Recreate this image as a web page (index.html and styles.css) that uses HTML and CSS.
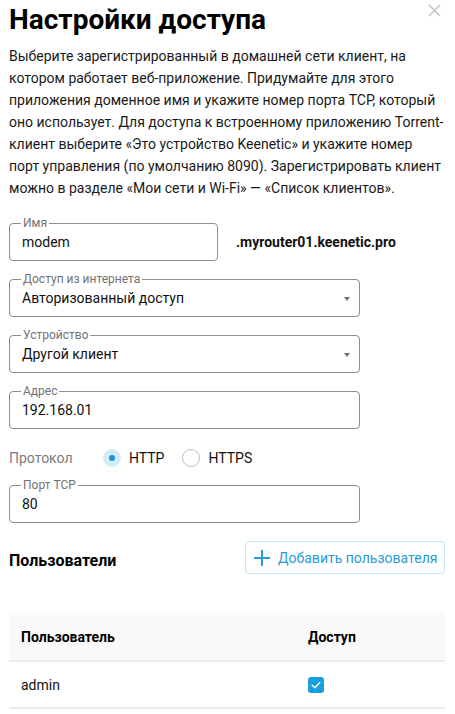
FILE: index.html
```html
<!DOCTYPE html>
<html lang="ru">
<head>
<meta charset="utf-8">
<title>Настройки доступа</title>
<link rel="stylesheet" href="styles.css">
</head>
<body>
<div class="dialog">
  <button class="close" aria-label="Закрыть">
    <svg width="13" height="13" viewBox="0 0 13 13"><path d="M1 1L12 12M12 1L1 12" stroke="#c4c4c4" stroke-width="1.6" fill="none"/></svg>
  </button>
  <h1 class="title">Настройки доступа</h1>
  <p class="intro">Выберите зарегистрированный в домашней сети клиент, на котором работает веб-приложение. Придумайте для этого приложения доменное имя и укажите номер порта TCP, который оно использует. Для доступа к встроенному приложению Torrent-клиент выберите «Это устройство Keenetic» и укажите номер порт управления (по умолчанию 8090). Зарегистрировать клиент можно в разделе «Мои сети и Wi-Fi» — «Список клиентов».</p>

  <div class="form">
    <div class="name-row">
      <div class="field field-short">
        <span class="field-label">Имя</span>
        <span class="field-value">modem</span>
      </div>
      <span class="domain">.myrouter01.keenetic.pro</span>
    </div>

    <div class="field">
      <span class="field-label">Доступ из интернета</span>
      <span class="field-value">Авторизованный доступ</span>
      <span class="caret"></span>
    </div>

    <div class="field">
      <span class="field-label">Устройство</span>
      <span class="field-value">Другой клиент</span>
      <span class="caret"></span>
    </div>

    <div class="field">
      <span class="field-label">Адрес</span>
      <span class="field-value">192.168.01</span>
    </div>

    <div class="protocol">
      <span class="protocol-label">Протокол</span>
      <label class="radio"><span class="radio-mark checked"></span>HTTP</label>
      <label class="radio"><span class="radio-mark"></span>HTTPS</label>
    </div>

    <div class="field">
      <span class="field-label">Порт TCP</span>
      <span class="field-value">80</span>
    </div>
  </div>

  <div class="users-head">
    <h2 class="users-title">Пользователи</h2>
    <button class="add-btn">
      <svg width="16" height="16" viewBox="0 0 16 16"><path d="M8 0V16M0 8H16" stroke="#2a9ad6" stroke-width="2" fill="none"/></svg>
      Добавить пользователя
    </button>
  </div>

  <table class="users">
    <thead>
      <tr><th class="col-user">Пользователь</th><th>Доступ</th></tr>
    </thead>
    <tbody>
      <tr>
        <td class="col-user">admin</td>
        <td><span class="checkbox"><svg width="16" height="16" viewBox="0 0 16 16"><path d="M4.2 8.3L6.9 10.8L11.8 5.6" stroke="#fff" stroke-width="1.4" fill="none" stroke-linecap="round" stroke-linejoin="round"/></svg></span></td>
      </tr>
    </tbody>
  </table>
</div>
</body>
</html>
```

FILE: styles.css
```css
* { box-sizing: border-box; }
html, body { margin: 0; padding: 0; background: #fff; }
body {
  font-family: Roboto, "Noto Sans", Arial, sans-serif;
  color: #1a1a1a;
  width: 455px;
}
.dialog {
  position: relative;
  padding: 3px 10px 0 9px;
}
.close {
  position: absolute;
  top: 4px;
  right: 14px;
  width: 13px;
  height: 13px;
  padding: 0;
  border: 0;
  background: none;
  display: block;
}
.close svg { display: block; }
.title {
  margin: 0;
  font-size: 28px;
  line-height: 34px;
  font-weight: 700;
  color: #000;
}
.intro {
  margin: 8px 0 0;
  font-size: 14px;
  line-height: 22px;
  color: #1a1a1a;
}
.form {
  margin-top: 24px;
  display: flex;
  flex-direction: column;
  gap: 18px;
}
.name-row {
  display: flex;
  align-items: center;
  gap: 18px;
}
.field {
  position: relative;
  width: 351px;
  height: 38px;
  border: 1px solid #8e8e8e;
  border-radius: 4px;
  display: flex;
  align-items: center;
  padding: 0 12px;
}
.field-short { width: 209px; }
.field-label {
  position: absolute;
  top: -8px;
  left: 11px;
  padding: 0 2px;
  background: #fff;
  font-size: 12px;
  line-height: 14px;
  color: #727272;
}
.field-value {
  font-size: 14px;
  line-height: 18px;
  color: #111;
}
.caret {
  position: absolute;
  right: 9px;
  top: 17px;
  width: 0;
  height: 0;
  border-left: 3.5px solid transparent;
  border-right: 3.5px solid transparent;
  border-top: 4px solid #707070;
}
.domain {
  font-size: 14px;
  font-weight: 700;
  color: #111;
}
.protocol {
  margin-top: 2px;
  height: 18px;
  display: flex;
  align-items: center;
  font-size: 14px;
}
.protocol-label {
  width: 94px;
  color: #7a7a7a;
}
.radio {
  display: flex;
  align-items: center;
  color: #111;
  margin-right: 18px;
}
.radio-mark {
  width: 18px;
  height: 18px;
  border-radius: 50%;
  border: 1px solid #bdbdbd;
  background: #fff;
  margin-right: 8px;
  position: relative;
}
.radio-mark.checked {
  border-color: #d4ebf8;
  background: #d4ebf8;
}
.radio-mark.checked::after {
  content: "";
  position: absolute;
  left: 5px;
  top: 5px;
  width: 6px;
  height: 6px;
  border-radius: 50%;
  background: #1697dc;
}
.users-head {
  margin-top: 18px;
  display: flex;
  align-items: center;
  justify-content: space-between;
}
.users-title {
  margin: 0;
  padding-top: 5px;
  font-size: 16px;
  line-height: 19px;
  font-weight: 700;
  color: #000;
}
.add-btn {
  width: 200px;
  height: 33px;
  border: 1px solid #c9e4f4;
  border-radius: 4px;
  background: #fff;
  color: #2a9ad6;
  font-family: inherit;
  font-size: 14px;
  display: flex;
  align-items: center;
  gap: 8px;
  padding: 0 0 0 8px;
}
.add-btn svg { display: block; }
.users {
  margin-top: 39px;
  width: 436px;
  border-collapse: collapse;
  font-size: 14px;
}
.users th {
  background: #f9f9f9;
  height: 48px;
  text-align: left;
  font-weight: 700;
  color: #000;
  padding: 0;
  border-bottom: 2px solid #ebebeb;
}
.users td {
  height: 47px;
  padding: 0;
  border-bottom: 2px solid #ebebeb;
  color: #111;
}
.users .col-user {
  width: 299px;
  padding-left: 12px;
}
.checkbox {
  width: 16px;
  height: 16px;
  border-radius: 3px;
  background: #169ee0;
  display: block;
  margin-top: 1px;
}
.checkbox svg { display: block; }
```
